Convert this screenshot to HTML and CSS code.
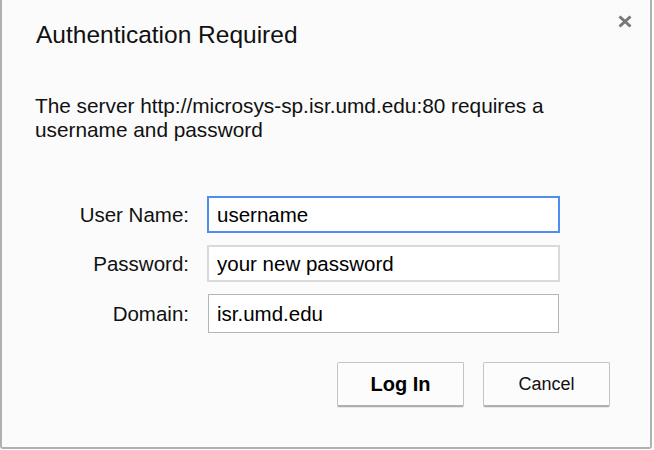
FILE: index.html
```html
<!DOCTYPE html>
<html lang="en">
<head>
  <meta charset="UTF-8" />
  <meta name="viewport" content="width=device-width, initial-scale=1.0" />
  <title>Authentication Required</title>
  <link rel="stylesheet" href="styles.css">
</head>
<body>

  <div class="dialog">
    <button class="close-btn" aria-label="Close">
      <svg width="14" height="13" viewBox="0 0 14 13">
        <path d="M1.5 1.5 L12.5 11.5 M12.5 1.5 L1.5 11.5" stroke="#777" stroke-width="3" fill="none" />
      </svg>
    </button>

    <h1 class="title">Authentication Required</h1>

    <p class="message">The server http://microsys-sp.isr.umd.edu:80 requires a username and password</p>

    <!-- Login fields -->
    <form class="login-form">
      <label for="username">User Name:</label>
      <input type="text" id="username" class="field focused" value="username" />

      <label for="password">Password:</label>
      <input type="text" id="password" class="field light" value="your new password" />

      <label for="domain">Domain:</label>
      <input type="text" id="domain" class="field domain" value="isr.umd.edu" />
    </form>

    <div class="actions">
      <button class="btn btn-login">Log In</button>
      <button class="btn">Cancel</button>
    </div>
  </div>

</body>
</html>
```

FILE: styles.css
```css
body {
  margin: 0;
  background: #fff;
  font-family: "Liberation Sans", Arial, sans-serif;
  color: #111;
}

.dialog {
  position: relative;
  box-sizing: border-box;
  width: 652px;
  height: 449px;
  background: #fbfbfb;
  border-left: 2px solid #b0b0b0;
  border-right: 2px solid #b0b0b0;
  border-bottom: 2px solid #b0b0b0;
  border-radius: 0 0 3px 3px;
}

.close-btn {
  position: absolute;
  top: 15px;
  right: 18px;
  width: 14px;
  height: 13px;
  padding: 0;
  border: none;
  background: none;
  cursor: pointer;
}

.close-btn svg {
  display: block;
}

.title {
  margin: 0;
  padding: 20px 0 0 34px;
  font-size: 24.5px;
  font-weight: normal;
  line-height: 30px;
  color: #111;
}

.message {
  width: 540px;
  margin: 44px 0 0 33px;
  font-size: 20.8px;
  line-height: 24px;
}

.login-form {
  display: grid;
  grid-template-columns: 153px 353px;
  grid-template-rows: 37px 37px 39px;
  column-gap: 18px;
  row-gap: 12px;
  align-items: center;
  margin: 54px 0 0 34px;
}

.login-form label {
  text-align: right;
  font-size: 20.5px;
  color: #111;
}

.field {
  box-sizing: border-box;
  height: 100%;
  width: 100%;
  padding: 0 8px;
  font-family: "Liberation Sans", Arial, sans-serif;
  font-size: 20.5px;
  color: #000;
  background: #fff;
  border: 2px solid #dadada;
  outline: none;
}

.field.focused {
  border-color: #4d8ef0;
}

.field.domain {
  width: 351px;
  margin-left: 1px;
  border: 1px solid #b5b5b5;
}

.actions {
  display: flex;
  justify-content: flex-end;
  gap: 19px;
  margin-top: 29px;
  padding-right: 40px;
}

.btn {
  box-sizing: border-box;
  width: 127px;
  height: 45px;
  font-family: "Liberation Sans", Arial, sans-serif;
  font-size: 18px;
  color: #111;
  background: #fcfcfc;
  border: 1px solid #c4c4c4;
  border-bottom: 2px solid #b0b0b0;
  border-radius: 2px;
  box-shadow: 0 1px 0 rgba(0, 0, 0, 0.08);
  cursor: pointer;
}

.btn-login {
  font-size: 20px;
  font-weight: bold;
  color: #000;
}
```
